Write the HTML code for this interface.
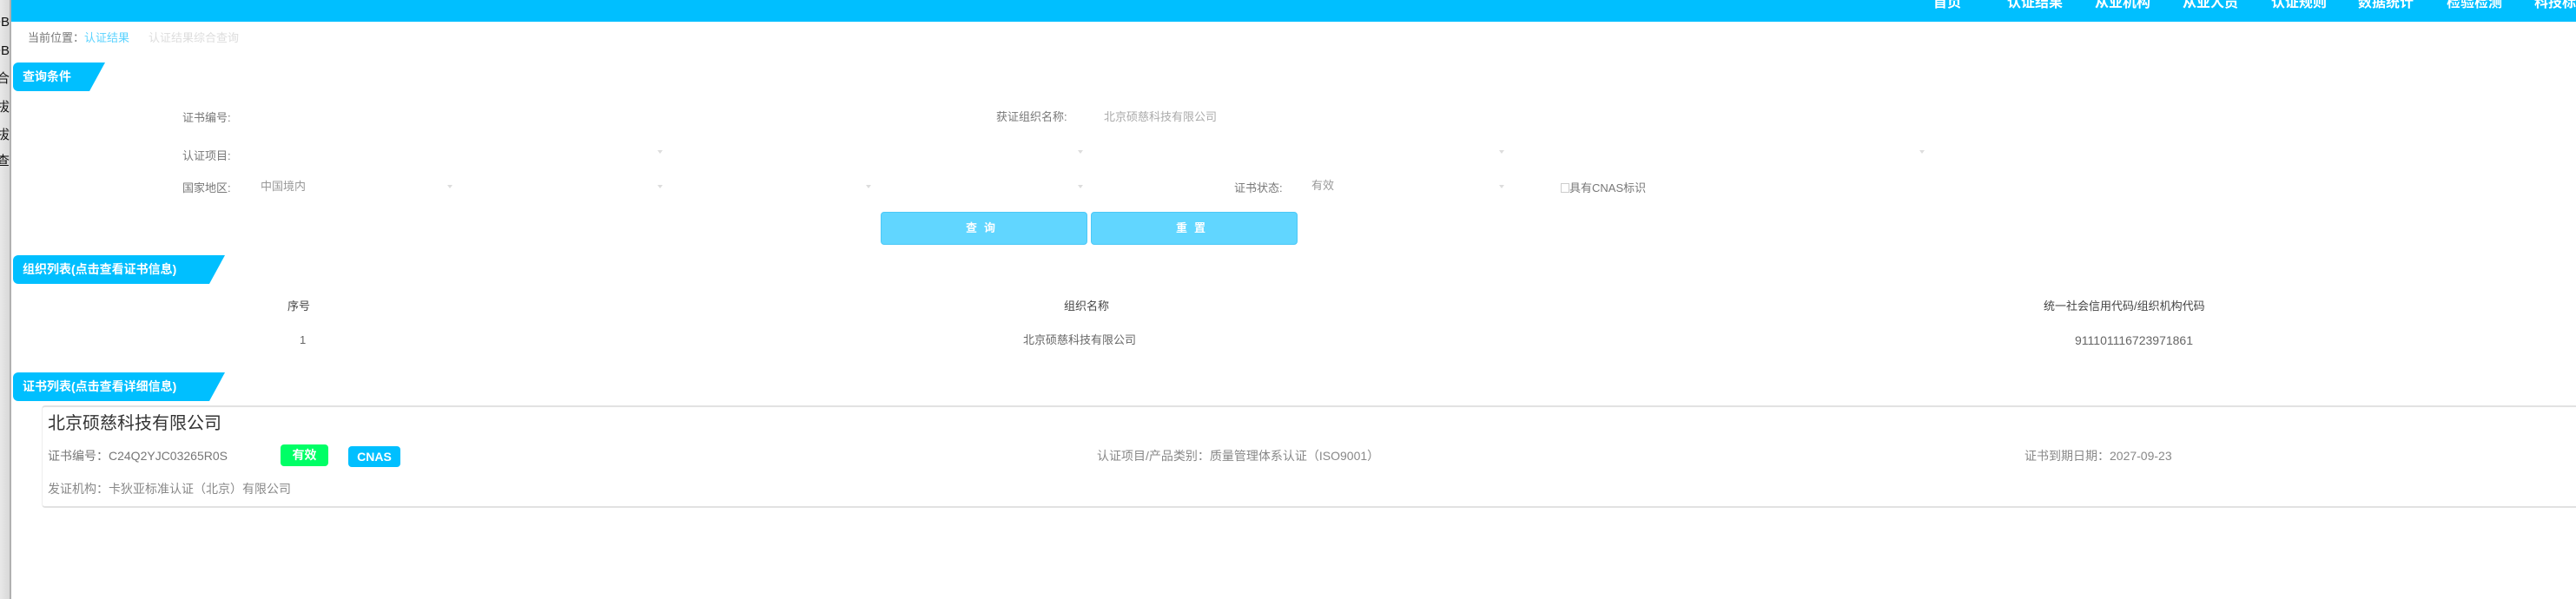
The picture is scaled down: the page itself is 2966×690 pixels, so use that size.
<!DOCTYPE html>
<html><head><meta charset="utf-8">
<style>
*{margin:0;padding:0;box-sizing:border-box}
body{width:2966px;height:690px;overflow:hidden;background:#fff;position:relative;font-family:"Liberation Sans","Noto Sans CJK SC",sans-serif;color:#555;font-size:13px}
.a{position:absolute;white-space:nowrap;line-height:1}
.strip{position:absolute;left:0;top:0;width:13px;height:690px;background:linear-gradient(90deg,#e8e8e8,#d8d8d8);border-right:2px solid #b0b0b0;overflow:hidden}
.strip div{position:absolute;right:0;font-size:15px;color:#111;line-height:1;white-space:nowrap}
.bar{position:absolute;left:13px;top:0;width:2953px;height:25px;background:#00bfff}
.nav{position:absolute;top:-4px;color:#fff;font-weight:bold;font-size:16px;line-height:1;white-space:nowrap}
.tag{position:absolute;left:15px;height:33px;background:#00bfff;color:#fff;font-weight:bold;font-size:14px;line-height:33px;padding-left:11px;border-radius:6px 0 0 6px;clip-path:polygon(0 0,100% 0,calc(100% - 18px) 100%,0 100%);white-space:nowrap}
.lbl{color:#777}
.arr{position:absolute;width:0;height:0;border-left:3px solid transparent;border-right:3px solid transparent;border-top:4px solid #ddd}
.btn{position:absolute;top:244px;height:38px;width:238px;background:#61d6ff;border:1px solid #4cc8f7;border-radius:4px;color:#fff;font-weight:bold;font-size:13px;text-align:center;line-height:36px;letter-spacing:8px}
.badge{position:absolute;color:#fff;font-weight:bold;font-size:14px;text-align:center;border-radius:4px}
</style></head><body>
<div class="strip">
<div style="top:18px">+B</div><div style="top:51px">+B</div><div style="top:83px">王合</div><div style="top:116px">业拔</div><div style="top:148px">业拔</div><div style="top:178px">想查</div>
</div>
<div class="bar"></div>
<div class="nav" style="left:2226px">首页</div>
<div class="nav" style="left:2311px">认证结果</div>
<div class="nav" style="left:2412px">从业机构</div>
<div class="nav" style="left:2513px">从业人员</div>
<div class="nav" style="left:2615px">认证规则</div>
<div class="nav" style="left:2715px">数据统计</div>
<div class="nav" style="left:2817px">检验检测</div>
<div class="nav" style="left:2918px">科技标</div>

<div class="a" style="left:32px;top:37px;font-size:13px"><span style="color:#777">当前位置：</span><span style="color:#5bd3ff">认证结果</span><span style="color:#ddd;margin-left:22px">认证结果综合查询</span></div>

<div class="tag" style="top:72px;width:106px">查询条件</div>
<div class="a lbl" style="left:210px;top:129px">证书编号:</div>
<div class="a lbl" style="left:1147px;top:128px">获证组织名称:</div>
<div class="a" style="left:1271px;top:128px;color:#aaa">北京硕慈科技有限公司</div>
<div class="a lbl" style="left:210px;top:173px">认证项目:</div>
<div class="arr" style="left:757px;top:173px"></div><div class="arr" style="left:1241px;top:173px"></div><div class="arr" style="left:1726px;top:173px"></div><div class="arr" style="left:2210px;top:173px"></div>
<div class="a lbl" style="left:210px;top:210px">国家地区:</div>
<div class="a" style="left:300px;top:208px;color:#999">中国境内</div>
<div class="arr" style="left:515px;top:213px"></div><div class="arr" style="left:757px;top:213px"></div><div class="arr" style="left:997px;top:213px"></div><div class="arr" style="left:1241px;top:213px"></div><div class="arr" style="left:1726px;top:213px"></div>
<div class="a lbl" style="left:1421px;top:210px">证书状态:</div>
<div class="a" style="left:1510px;top:207px;color:#999">有效</div>
<div class="a" style="left:1797px;top:210px;color:#777"><span style="display:inline-block;width:10px;height:11px;border:1px solid #ccc;vertical-align:-1px"></span>具有CNAS标识</div>
<div class="btn" style="left:1014px">查询</div>
<div class="btn" style="left:1256px">重置</div>

<div class="tag" style="top:294px;width:244px">组织列表(点击查看证书信息)</div>
<div class="a" style="left:331px;top:346px;color:#444">序号</div>
<div class="a" style="left:1225px;top:346px;color:#444">组织名称</div>
<div class="a" style="left:2353px;top:346px;color:#444">统一社会信用代码/组织机构代码</div>
<div class="a" style="left:345px;top:385px;color:#666">1</div>
<div class="a" style="left:1178px;top:385px;color:#666">北京硕慈科技有限公司</div>
<div class="a" style="left:2389px;top:385px;color:#666;font-size:14px">911101116723971861</div>

<div class="tag" style="top:429px;width:244px">证书列表(点击查看详细信息)</div>
<div style="position:absolute;left:48px;top:467px;width:2930px;height:118px;border-top:2px solid #e2e2e2;border-bottom:2px solid #e2e2e2;border-left:1px solid #eee;border-radius:4px 0 0 4px"></div>
<div class="a" style="left:55px;top:478px;font-size:20px;color:#333">北京硕慈科技有限公司</div>
<div class="a" style="left:55px;top:518px;font-size:14px;color:#777">证书编号：C24Q2YJC03265R0S</div>
<div class="badge" style="left:323px;top:512px;width:55px;height:25px;line-height:25px;background:#00ff66">有效</div>
<div class="badge" style="left:401px;top:514px;width:60px;height:24px;line-height:24px;background:#00bfff">CNAS</div>
<div class="a" style="left:1263px;top:518px;font-size:14px;color:#888">认证项目/产品类别：质量管理体系认证（ISO9001）</div>
<div class="a" style="left:2331px;top:518px;font-size:14px;color:#888">证书到期日期：2027-09-23</div>
<div class="a" style="left:55px;top:556px;font-size:14px;color:#888">发证机构：卡狄亚标准认证（北京）有限公司</div>
</body></html>
